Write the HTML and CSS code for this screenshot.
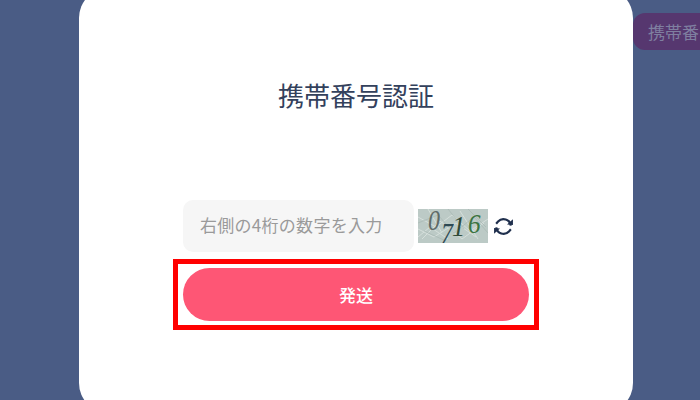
FILE: index.html
```html
<!DOCTYPE html>
<html lang="ja">
<head>
<meta charset="utf-8">
<title>携帯番号認証</title>
<link rel="stylesheet" href="styles.css">
</head>
<body>
<div class="backdrop">
  <div class="behind-pill">携帯番</div>
  <main class="modal">
    <h1 class="title">携帯番号認証</h1>
    <div class="form">
      <div class="captcha-row">
        <div class="field">右側の4桁の数字を入力</div>
        <div class="captcha">
          <svg class="captcha-noise" viewBox="0 0 70 34" width="70" height="34" aria-hidden="true">
            <rect width="70" height="34" fill="#bccac6"/>
            <path d="M0 8 18 18 34 6 52 22 70 10M4 30 22 12 44 30 66 14M0 20 16 28 38 14 58 28M10 0 24 24M42 2 60 30M0 28 12 18 30 30" fill="none" stroke="#d5dfdb" stroke-width="1"/>
            <path d="M0 14 20 6 36 24 56 8 70 24M6 22 28 32M30 0 46 20M50 0 68 18" fill="none" stroke="#a7b8b3" stroke-width=".7"/>
          </svg>
          <span class="digit digit-0">0</span>
          <span class="digit digit-7">7</span>
          <span class="digit digit-1">1</span>
          <span class="digit digit-6">6</span>
        </div>
        <svg class="refresh" viewBox="0 0 24 24" width="21" height="21" aria-hidden="true">
          <path d="M20.3 11A8.4 8.4 0 0 0 5.8 6.3L3.6 8.8" fill="none" stroke="#1f2f4d" stroke-width="2.5"/>
          <path d="M3.7 13a8.4 8.4 0 0 0 14.5 4.7L20.4 15.2" fill="none" stroke="#1f2f4d" stroke-width="2.5"/>
          <path d="M16 9.6 22.8 10.4 22.8 3.6Z" fill="#1f2f4d"/>
          <path d="M8 14.4 1.2 13.6 1.2 20.4Z" fill="#1f2f4d"/>
        </svg>
      </div>
      <div class="highlight">
        <button class="send" type="button">発送</button>
      </div>
    </div>
  </main>
</div>
</body>
</html>
```

FILE: styles.css
```css
* { box-sizing: border-box; }
html, body { margin: 0; height: 100%; }
body {
  width: 700px;
  height: 400px;
  overflow: hidden;
  font-family: "Noto Sans CJK JP", "Noto Sans", sans-serif;
  background: #4a5c85;
}
.backdrop {
  position: relative;
  width: 700px;
  height: 400px;
  overflow: hidden;
  display: flex;
  justify-content: flex-start;
  padding-left: 79px;
  background: #4a5c85;
}
.behind-pill {
  position: absolute;
  left: 633px;
  top: 13px;
  width: 110px;
  height: 37px;
  padding-left: 15px;
  border-radius: 12px;
  background: #56376f;
  color: #7f7fa0;
  font-size: 17px;
  line-height: 37px;
  white-space: nowrap;
}
.modal {
  width: 554px;
  height: 425px;
  margin-top: -12px;
  flex: none;
  background: #fff;
  border-radius: 30px;
  display: flex;
  flex-direction: column;
  align-items: center;
}
.title {
  margin: 87px 0 0;
  height: 40px;
  font-size: 26px;
  line-height: 40px;
  font-weight: 400;
  color: #33415c;
}
.form {
  width: 366px;
  margin-top: 85px;
  display: flex;
  flex-direction: column;
  align-items: center;
}
.captcha-row {
  width: 346px;
  height: 52px;
  display: flex;
  align-items: center;
}
.field {
  width: 231px;
  height: 52px;
  padding-left: 17px;
  border-radius: 10px;
  background: #f6f6f6;
  color: #9a9a9a;
  font-size: 17px;
  letter-spacing: .28px;
  line-height: 49px;
  white-space: nowrap;
}
.captcha {
  position: relative;
  width: 70px;
  height: 34px;
  margin-left: 4px;
  font-family: "Liberation Serif", serif;
  font-style: italic;
  font-size: 24px;
  line-height: 24px;
}
.captcha-noise { display: block; }
.digit { position: absolute; transform-origin: left top; }
.digit-0 { left: 10px; top: -3px; color: #5f6b68; transform: scale(1, 1.2); }
.digit-7 { left: 23px; top: 10px; color: #2e4a54; transform: scale(1, 1.2); }
.digit-1 { left: 34px; top: 2px; color: #2f4a38; transform: scale(1.1, 1.25); }
.digit-6 { left: 50px; top: 1px; color: #3a7440; transform: scale(1.05, 1.15); }
.refresh { margin-left: 5px; flex: none; }
.highlight {
  width: 366px;
  height: 71px;
  margin-top: 7px;
  padding: 4px 5px;
  border: 5px solid #f00;
}
.send {
  display: block;
  width: 346px;
  height: 53px;
  border: 0;
  padding: 0;
  border-radius: 27px;
  background: #fe5675;
  color: #fff;
  font-family: inherit;
  font-size: 17px;
  font-weight: 500;
}
```
